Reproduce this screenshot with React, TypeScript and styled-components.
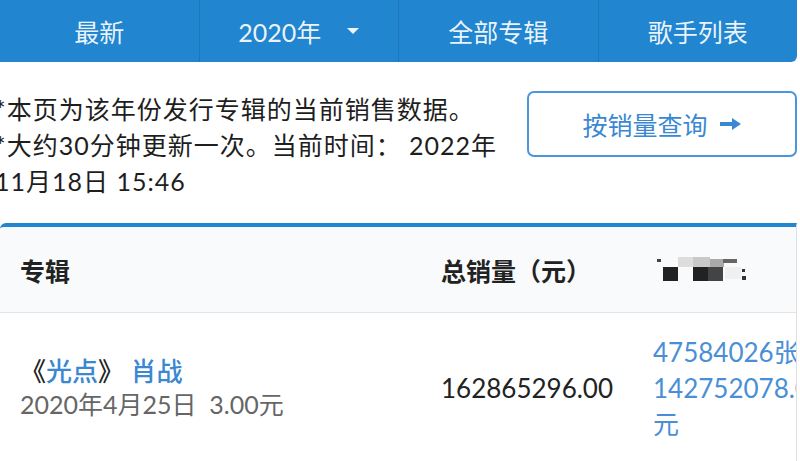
import styled, { createGlobalStyle } from 'styled-components';

const GlobalStyle = createGlobalStyle`
  html, body {
    margin: 0;
    padding: 0;
    background: #ffffff;
    overflow: hidden;
  }
  body {
    font-family: Lato, 'Noto Sans CJK SC', sans-serif;
    color: rgba(0, 0, 0, 0.87);
  }
  * {
    box-sizing: border-box;
  }
`;

const navItems = [
  { name: '最新' },
  { name: '2020年', dropdown: true },
  { name: '全部专辑' },
  { name: '歌手列表' },
];

const App = () => {
  return (
    <Page>
      <GlobalStyle />
      <Nav>
        {navItems.map((item, i) => (
          <NavItem key={item.name} first={i === 0}>
            {item.name}
            {item.dropdown && <Caret />}
          </NavItem>
        ))}
      </Nav>

      <InfoRow>
        <Notice>
          *本页为该年份发行专辑的当前销售数据。
          <br />
          *大约30分钟更新一次。当前时间： 2022年11月18日 15:46
        </Notice>
        <QueryButton>
          按销量查询
          <svg width="22" height="14" viewBox="0 0 22 14">
            <rect x="0" y="5" width="13" height="4" fill="currentColor" />
            <polygon points="12,1 21,7 12,13" fill="currentColor" />
          </svg>
        </QueryButton>
      </InfoRow>

      <Table>
        <HeadRow>
          <HeadCell>专辑</HeadCell>
          <HeadCell>总销量（元）</HeadCell>
          <HeadCell>
            <svg width="96" height="30" viewBox="0 0 96 30">
              <rect x="4" y="4" width="4" height="3" fill="#444" />
              <rect x="25" y="2" width="15" height="10" fill="#ddd" />
              <rect x="10" y="12" width="15" height="14" fill="#222" />
              <rect x="25" y="12" width="15" height="14" fill="#fafafa" />
              <rect x="40" y="2" width="17" height="10" fill="#c9c9c9" />
              <rect x="40" y="12" width="15" height="14" fill="#222" />
              <rect x="55" y="12" width="15" height="14" fill="#444" />
              <rect x="57" y="4" width="14" height="8" fill="#aaa" />
              <rect x="70" y="4" width="14" height="4" fill="#666" />
              <rect x="72" y="12" width="16" height="12" fill="#f0f0f0" />
              <rect x="89" y="14" width="3" height="3" fill="#333" />
              <rect x="89" y="21" width="4" height="4" fill="#333" />
            </svg>
          </HeadCell>
        </HeadRow>
        <BodyRow>
          <Cell>
            <AlbumTitle>
              《<AlbumLink>光点</AlbumLink>》 <AlbumLink>肖战</AlbumLink>
            </AlbumTitle>
            <AlbumMeta>2020年4月25日&nbsp;&nbsp;3.00元</AlbumMeta>
          </Cell>
          <Cell>
            <Amount>162865296.00</Amount>
          </Cell>
          <Cell>
            <Stats>
              47584026张
              <br />
              142752078.00
              <br />元
            </Stats>
          </Cell>
        </BodyRow>
      </Table>
    </Page>
  );
};

export default App;

const Page = styled.div`
  width: 797px;
  height: 461px;
  overflow: hidden;
`;

const Nav = styled.div`
  display: flex;
  height: 62px;
  background-color: #2185d0;
  border-bottom-right-radius: 6px;
`;

const NavItem = styled.div<{ first?: boolean }>`
  flex: 1;
  display: flex;
  align-items: center;
  justify-content: center;
  color: rgba(255, 255, 255, 0.92);
  font-size: 25px;
  border-left: ${(props) => (props.first ? 'none' : '1px solid rgba(0, 0, 0, 0.1)')};
`;

const Caret = styled.span`
  display: inline-block;
  margin-left: 26px;
  width: 0;
  height: 0;
  border-left: 6px solid transparent;
  border-right: 6px solid transparent;
  border-top: 6px solid rgba(255, 255, 255, 0.92);
`;

const InfoRow = styled.div`
  display: flex;
  align-items: flex-start;
  margin-top: 29px;
`;

const Notice = styled.div`
  width: 505px;
  margin-left: -5px;
  font-size: 25px;
  line-height: 36px;
  letter-spacing: 1px;
  color: #1e1e1e;
`;

const QueryButton = styled.div`
  margin-left: auto;
  width: 270px;
  height: 66px;
  display: flex;
  align-items: center;
  justify-content: center;
  gap: 12px;
  border: 2px solid #4b95dc;
  border-radius: 7px;
  color: #3a87d2;
  font-size: 25px;
`;

const Table = styled.div`
  margin-top: 24px;
  border-top: 4px solid #2185d0;
  border-right: 1px solid #e0e0e0;
  border-top-left-radius: 6px;
  overflow: hidden;
`;

const HeadRow = styled.div`
  display: grid;
  grid-template-columns: 441px 212px 300px;
  height: 86px;
  background-color: #f9fafb;
  border-bottom: 1px solid #e3e4e5;
`;

const HeadCell = styled.div`
  display: flex;
  align-items: center;
  padding-left: 20px;
  font-size: 25px;
  font-weight: 600;
  color: #222;
  &:nth-child(n + 2) {
    padding-left: 0;
  }
`;

const BodyRow = styled.div`
  display: grid;
  grid-template-columns: 441px 212px 300px;
  height: 150px;
`;

const Cell = styled.div`
  display: flex;
  flex-direction: column;
  justify-content: center;
  padding-left: 20px;
  &:nth-child(n + 2) {
    padding-left: 0;
  }
`;

const AlbumTitle = styled.div`
  font-size: 26px;
  line-height: 33px;
  font-weight: 500;
  color: #222;
`;

const AlbumLink = styled.span`
  color: #3a87d2;
`;

const AlbumMeta = styled.div`
  font-size: 25px;
  line-height: 33px;
  color: #666;
`;

const Amount = styled.div`
  font-size: 26px;
  color: #222;
`;

const Stats = styled.div`
  font-size: 26px;
  line-height: 36px;
  color: #4a8fd6;
  white-space: nowrap;
`;
